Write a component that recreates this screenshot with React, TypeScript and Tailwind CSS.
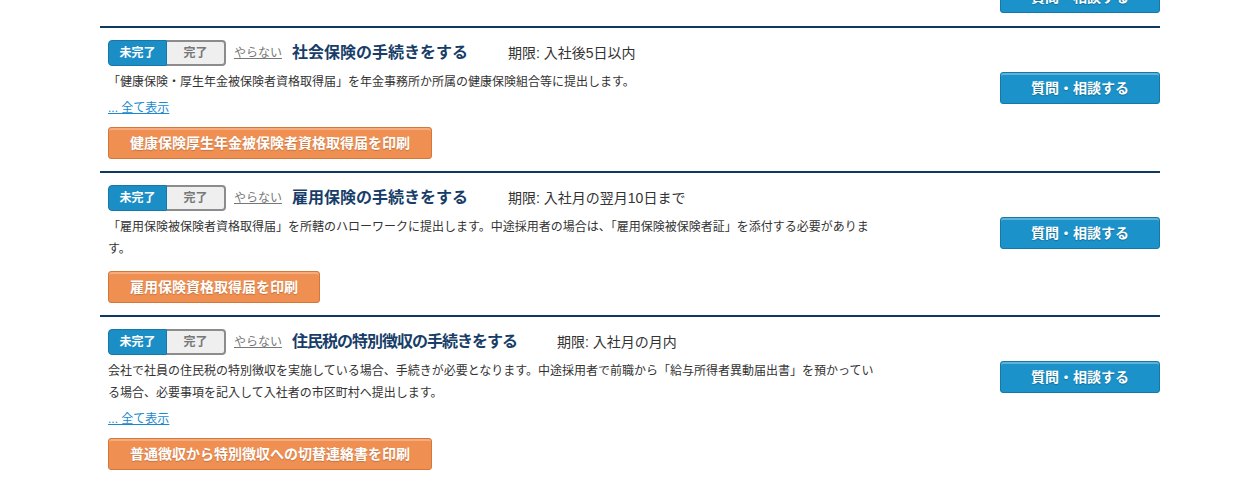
import React from "react";

type Task = {
  title: string;
  deadline: string;
  desc: string;
  showAll?: boolean;
  print: string;
  tight?: boolean;
};

const tasks: Task[] = [
  {
    title: "社会保険の手続きをする",
    deadline: "期限: 入社後5日以内",
    desc: "「健康保険・厚生年金被保険者資格取得届」を年金事務所か所属の健康保険組合等に提出します。",
    showAll: true,
    print: "健康保険厚生年金被保険者資格取得届を印刷",
  },
  {
    title: "雇用保険の手続きをする",
    deadline: "期限: 入社月の翌月10日まで",
    desc: "「雇用保険被保険者資格取得届」を所轄のハローワークに提出します。中途採用者の場合は、「雇用保険被保険者証」を添付する必要があります。",
    print: "雇用保険資格取得届を印刷",
  },
  {
    title: "住民税の特別徴収の手続きをする",
    deadline: "期限: 入社月の月内",
    desc: "会社で社員の住民税の特別徴収を実施している場合、手続きが必要となります。中途採用者で前職から「給与所得者異動届出書」を預かっている場合、必要事項を記入して入社者の市区町村へ提出します。",
    showAll: true,
    print: "普通徴収から特別徴収への切替連絡書を印刷",
    tight: true,
  },
];

function AskButton() {
  return (
    <button className="h-[32px] w-[160px] rounded-[3px] border border-[#1677a9] bg-[#1b92ca] text-[14px] font-bold leading-none text-white shadow-[inset_0_2px_0_rgba(255,255,255,0.3)] [text-shadow:0_1px_1px_rgba(0,0,0,0.25)]">
      質問・相談する
    </button>
  );
}

function StatusToggle() {
  return (
    <div className="flex h-[26px] text-[12px] font-bold leading-none">
      <span className="flex w-[59px] items-center justify-center rounded-l-[4px] border border-[#1677a9] bg-[#1b8ec6] text-white">
        未完了
      </span>
      <span className="flex w-[59px] items-center justify-center rounded-r-[4px] border-2 border-l-0 border-[#8c8c8c] bg-[#efefef] text-[#777]">
        完了
      </span>
    </div>
  );
}

function TaskRow({ t }: { t: Task }) {
  return (
    <div className="flex border-t-2 border-[#0f3a5f]">
      <div className="w-[780px] pl-2 pt-3 pb-3">
        <div className="flex items-center">
          <StatusToggle />
          <a className="ml-2 text-[12px] text-[#777] underline">やらない</a>
          <h3
            className={
              "ml-[10px] text-[16px] font-bold text-[#173d68]" +
              (t.tight ? " tracking-[-1px]" : "")
            }
          >
            {t.title}
          </h3>
          <span className="ml-[40px] text-[14px] text-[#333]">{t.deadline}</span>
        </div>
        <p className="mt-[5px] text-[12px] leading-[22px] text-[#333]">{t.desc}</p>
        {t.showAll && (
          <p className="mt-1 text-[12px] leading-[22px]">
            <a className="text-[#1a8ad0] underline">... 全て表示</a>
          </p>
        )}
        <button
          className={
            (t.showAll ? "mt-2" : "mt-[11px]") +
            " h-[32px] rounded-[3px] border border-[#d6773a] bg-[#f08f52] px-[21px] text-[14px] font-bold leading-none text-white shadow-[inset_0_2px_0_rgba(255,255,255,0.25)] [text-shadow:0_1px_1px_rgba(0,0,0,0.2)]"
          }
        >
          {t.print}
        </button>
      </div>
      <div className="ml-auto pt-[44px]">
        <AskButton />
      </div>
    </div>
  );
}

export default function App() {
  return (
    <div
      className="min-h-[483px] bg-white"
      style={{ fontFamily: '"Liberation Sans", "Noto Sans CJK JP", sans-serif' }}
    >
      <div className="mx-auto w-[1060px]">
        <div className="flex h-[26px] items-end justify-end overflow-hidden pb-[13px]">
          <div className="shrink-0">
            <AskButton />
          </div>
        </div>
        {tasks.map((t) => (
          <TaskRow key={t.title} t={t} />
        ))}
      </div>
    </div>
  );
}
